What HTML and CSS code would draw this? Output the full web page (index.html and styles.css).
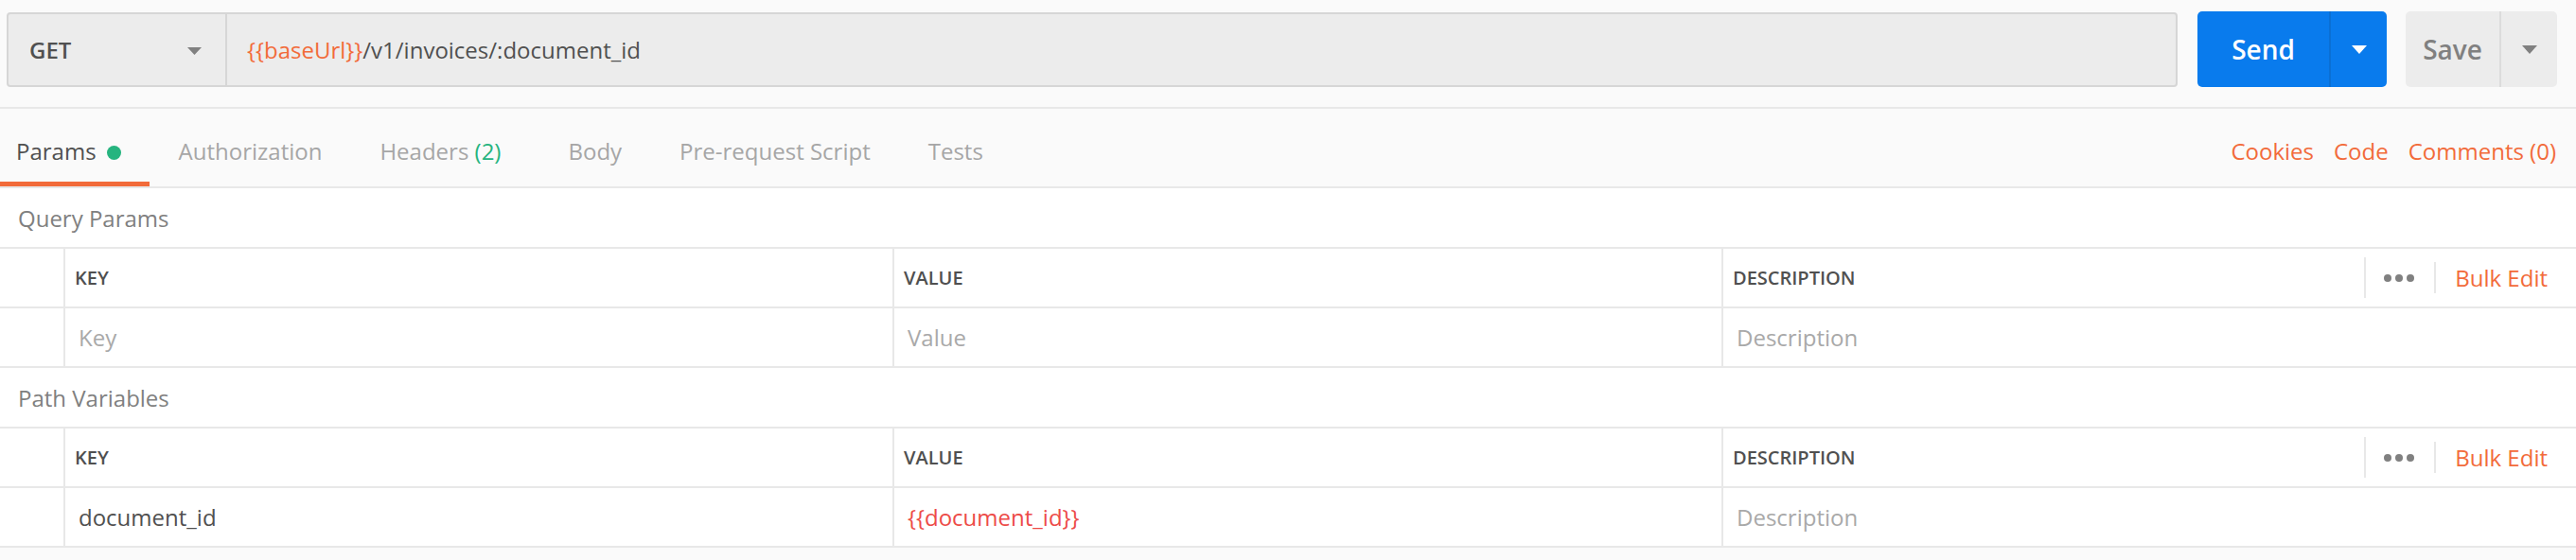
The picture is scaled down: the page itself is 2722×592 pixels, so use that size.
FILE: index.html
```html
<!DOCTYPE html>
<html lang="en">
<head>
<meta charset="utf-8">
<title>Request</title>
<link rel="stylesheet" href="styles.css">
</head>
<body>
<div class="request-bar">
  <div class="url-group">
    <div class="method">
      <span>GET</span>
      <svg class="caret" width="15" height="8" viewBox="0 0 15 8"><polygon points="0,0 15,0 7.5,8" fill="#808080"/></svg>
    </div>
    <div class="url"><span class="var">{{baseUrl}}</span>/v1/invoices/:document_id</div>
  </div>
  <div class="send-btn">
    <span class="btn-label">Send</span>
    <span class="btn-caret"><svg width="16" height="9" viewBox="0 0 16 9"><polygon points="0,0 16,0 8,9" fill="#ffffff"/></svg></span>
  </div>
  <div class="save-btn">
    <span class="btn-label">Save</span>
    <span class="btn-caret"><svg width="16" height="9" viewBox="0 0 16 9"><polygon points="0,0 16,0 8,9" fill="#808080"/></svg></span>
  </div>
</div>

<div class="tabs">
  <div class="tab-list">
    <div class="tab tab-active">Params<span class="dot"></span></div>
    <div class="tab">Authorization</div>
    <div class="tab">Headers <span class="count">(2)</span></div>
    <div class="tab">Body</div>
    <div class="tab">Pre-request Script</div>
    <div class="tab">Tests</div>
  </div>
  <div class="tab-links">
    <span class="link">Cookies</span>
    <span class="link">Code</span>
    <span class="link">Comments (0)</span>
  </div>
</div>

<div class="content">
  <div class="section-title">Query Params</div>
  <div class="kv-table">
    <div class="kv-row kv-head">
      <div class="cell cell-check"></div>
      <div class="cell">KEY</div>
      <div class="cell">VALUE</div>
      <div class="cell cell-desc">
        <span>DESCRIPTION</span>
        <div class="actions">
          <span class="sep sep-tall"></span>
          <span class="dots"><i></i><i></i><i></i></span>
          <span class="sep sep-short"></span>
          <span class="bulk">Bulk Edit</span>
        </div>
      </div>
    </div>
    <div class="kv-row kv-data">
      <div class="cell cell-check"></div>
      <div class="cell placeholder">Key</div>
      <div class="cell placeholder">Value</div>
      <div class="cell placeholder">Description</div>
    </div>
  </div>

  <div class="section-title">Path Variables</div>
  <div class="kv-table">
    <div class="kv-row kv-head">
      <div class="cell cell-check"></div>
      <div class="cell">KEY</div>
      <div class="cell">VALUE</div>
      <div class="cell cell-desc">
        <span>DESCRIPTION</span>
        <div class="actions">
          <span class="sep sep-tall"></span>
          <span class="dots"><i></i><i></i><i></i></span>
          <span class="sep sep-short"></span>
          <span class="bulk">Bulk Edit</span>
        </div>
      </div>
    </div>
    <div class="kv-row kv-data">
      <div class="cell cell-check"></div>
      <div class="cell">document_id</div>
      <div class="cell var-red">{{document_id}}</div>
      <div class="cell placeholder">Description</div>
    </div>
  </div>
</div>
</body>
</html>
```
FILE: styles.css
```css
* { box-sizing: border-box; }

body {
  margin: 0;
  background: #fafafa;
  font-family: "Open Sans", "Noto Sans", sans-serif;
  color: #505050;
}

/* ---------- request bar ---------- */
.request-bar {
  display: flex;
  align-items: stretch;
  height: 115px;
  padding: 12px 20px 21px 7px;
  border-bottom: 2px solid #e8e8e8;
}

.url-group {
  flex: 1;
  display: flex;
  margin-top: 1px;
  border: 2px solid #d6d6d6;
  border-radius: 4px;
  background: #ececec;
}

.method {
  flex: 0 0 231px;
  display: flex;
  align-items: center;
  justify-content: space-between;
  padding: 0 25px 0 22px;
  border-right: 2px solid #d6d6d6;
  font-size: 24px;
  font-weight: 600;
  color: #505050;
}

.caret { margin-top: 2px; }

.url {
  flex: 1;
  display: flex;
  align-items: center;
  padding-left: 21px;
  font-size: 24px;
  color: #505050;
}

.var { color: #f26b3a; }

.send-btn,
.save-btn {
  display: flex;
  margin-left: 21px;
  border-radius: 5px;
  font-size: 28px;
  font-weight: 600;
}

.send-btn {
  width: 200px;
  background: #097bed;
  color: #ffffff;
}

.save-btn {
  width: 160px;
  margin-left: 20px;
  background: #ececec;
  color: #808080;
}

.btn-label {
  flex: 1;
  display: flex;
  align-items: center;
  justify-content: center;
}

.btn-caret {
  flex: 0 0 61px;
  display: flex;
  align-items: center;
  justify-content: center;
  border-left: 2px solid #0a6fd4;
}

.save-btn .btn-caret { border-left-color: #dcdcdc; }

/* ---------- tabs ---------- */
.tabs {
  display: flex;
  justify-content: space-between;
  height: 84px;
  border-bottom: 2px solid #e8e8e8;
}

.tab-list { display: flex; }

.tab {
  display: flex;
  align-items: center;
  padding: 12px 30px 0 31px;
  border-bottom: 5px solid transparent;
  font-size: 24px;
  color: #a6a6a6;
  white-space: pre;
}

.tab-active {
  padding-left: 17px;
  color: #505050;
  border-bottom-color: #f26b3a;
}

.dot {
  width: 15px;
  height: 15px;
  margin-left: 11px;
  margin-top: 3px;
  border-radius: 50%;
  background: #26b47f;
}

.count {
  margin-right: 10px;
  color: #26b47f;
}

.tab-links {
  display: flex;
  align-items: center;
  gap: 21px;
  padding: 7px 21px 0 0;
  font-size: 24px;
}

.link { color: #f26b3a; }

/* ---------- params ---------- */
.content { background: #ffffff; }

.section-title {
  display: flex;
  align-items: center;
  height: 62px;
  padding-left: 19px;
  font-size: 24px;
  color: #808080;
}

.kv-table { border-top: 2px solid #e8e8e8; }

.kv-row {
  display: grid;
  grid-template-columns: 67px 876px 876px 1fr;
  height: 63px;
  border-bottom: 2px solid #e8e8e8;
}

.cell {
  display: flex;
  align-items: center;
  padding-left: 14px;
  border-left: 2px solid #e8e8e8;
  font-size: 24px;
  color: #505050;
}

.cell-check { border-left: none; padding: 0; }

.kv-head .cell {
  padding-left: 10px;
  font-size: 20px;
  font-weight: 600;
  color: #505050;
}

.kv-head .cell-check { padding: 0; }

.cell-desc { justify-content: space-between; }

.placeholder { color: #a9a9a9; }

.var-red { color: #ed4b48; }

.actions {
  display: flex;
  align-items: center;
  height: 100%;
  padding-right: 30px;
}

.sep {
  width: 2px;
  background: #e8e8e8;
}

.sep-tall { height: 43px; margin-right: 19px; }
.sep-short { height: 33px; margin-left: 21px; margin-right: 20px; }

.dots {
  display: flex;
  gap: 4px;
}

.dots i {
  display: block;
  width: 8px;
  height: 8px;
  border-radius: 50%;
  background: #808080;
}

.kv-head .bulk {
  font-size: 24px;
  font-weight: 400;
  color: #f26b3a;
}
```
